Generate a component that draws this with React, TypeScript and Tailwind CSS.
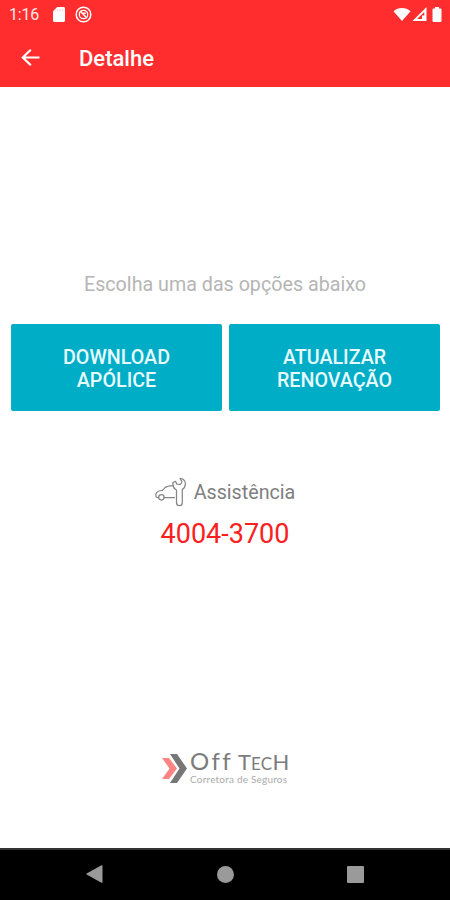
import type { ReactNode } from "react";

function StatusBar() {
  return (
    <div className="flex h-7 items-center justify-between pl-[9px] pr-2 text-white">
      <div className="flex items-center">
        <span className="w-11 pt-px text-[16px] leading-7 tracking-[-0.2px] text-white/90">1:16</span>
        <svg width="12" height="15" viewBox="0 0 12 15" fill="currentColor">
          <path d="M4.200 0H10.600Q12 0 12 1.400V13.600Q12 15 10.600 15H1.400Q0 15 0 13.600V4.200Z" />
          <path d="M4.600 2v2.400M6.900 2v2.400M9.200 2v2.400" stroke="#ffb5b5" strokeWidth="0.7" />
        </svg>
        <svg className="ml-2.5" width="17" height="17" viewBox="0 0 17 17" fill="none" stroke="currentColor">
          <circle cx="8.500" cy="8.500" r="7.300" strokeWidth="1.500" />
          <circle cx="8.500" cy="8.500" r="4.200" strokeWidth="1.300" />
          <path d="M5 5l7 7M8 7.200h2.800" strokeWidth="1.500" />
        </svg>
      </div>
      <div className="flex items-center">
        <svg width="18" height="13" viewBox="0 0 18 13" fill="currentColor">
          <path d="M9 13L.5 3.200Q4.200 0 9 0t8.500 3.200Z" />
        </svg>
        <svg className="ml-px" width="15" height="14" viewBox="0 0 15 14" fill="currentColor">
          <path fillRule="evenodd" d="M14.500 0V14H.5ZM12.300 5L5 12H10V8.500H12.300Z" />
        </svg>
        <svg className="ml-[5px]" width="10" height="15" viewBox="0 0 10 15" fill="currentColor">
          <path d="M3 0h4v1.500h1.500q1 0 1 1V14q0 1-1 1h-7q-1 0-1-1V2.500q0-1 1-1H3Z" />
        </svg>
      </div>
    </div>
  );
}

function ActionButton({ children }: { children: ReactNode }) {
  return (
    <button className="h-[87px] flex-1 rounded-[2px] bg-[#00adc6] pt-0.5 text-[19.7px] font-medium leading-[23px] text-[#e6faff]">
      {children}
    </button>
  );
}

function CarServiceIcon() {
  return (
    <svg
      width="32"
      height="30"
      viewBox="0 0 32 30"
      fill="none"
      stroke="#858585"
      strokeWidth="1.25"
      strokeLinecap="round"
      strokeLinejoin="round"
    >
      <path d="M18.500 8.600C14.500 8.800 12 9 10 10.600L7.500 13.300C4.500 13.500 1 15 .9 17.500V19.300Q1 20.500 3.500 20.500" />
      <circle cx="6.400" cy="20.300" r="2.700" />
      <path d="M9.300 20.500H19.500" />
      <path d="M21.500 13V25.800a2.900 2.900 0 0 0 5.800 0V12.500C31.300 10 31.300 4.500 27.800 2L25 1.400L27 4.800L25.500 7.500L22 7.200L20.500 4.300L17.800 5.800C17.700 9 19 11.800 21.500 13Z" />
    </svg>
  );
}

function Logo() {
  return (
    <div className="flex h-9 w-[128px]">
      <svg className="shrink-0" width="27" height="32" viewBox="0 0 27 32">
        <path d="M1 5H8L16 15.500L8 26H1L8.500 15.500Z" fill="#ff8585" />
        <path d="M9 1H16L26 15.500L16 30H9L18.500 15.500Z" fill="#777" />
      </svg>
      <div className="ml-0.5 whitespace-nowrap font-['Lato',sans-serif]">
        <div className="flex h-5 items-baseline text-[#7c7c7c]">
          <span className="w-[48px] text-[24px] leading-4 tracking-[2.400px]">Off</span>
          <span className="text-[22px] leading-4">T</span>
          <span className="text-[17px] leading-4 tracking-[0.3px]">EC</span>
          <span className="text-[22px] leading-4">H</span>
        </div>
        <p className="text-[10px] leading-[13px] tracking-[0.2px] text-[#aaa]">Corretora de Seguros</p>
      </div>
    </div>
  );
}

function NavigationBar() {
  return (
    <nav className="flex h-[52px] items-center justify-between border-t-2 border-[#333] bg-black px-[86px] pb-0.5 text-[#9a9a9a]">
      <svg width="17" height="18" viewBox="0 0 17 18" fill="currentColor">
        <path d="M15.500.3Q16.500 0 16.500 1V17Q16.500 18 15.500 17.700L.6 9.600Q0 9 .6 8.400Z" />
      </svg>
      <span className="size-[17px] rounded-full bg-[#9a9a9a]" />
      <span className="size-[17px] rounded-[1px] bg-[#9a9a9a]" />
    </nav>
  );
}

export default function App() {
  return (
    <div className="flex h-[900px] w-[450px] flex-col overflow-hidden bg-white font-['Roboto',sans-serif]">
      <header className="h-[87px] bg-[#ff2d2d]">
        <StatusBar />
        <div className="flex h-[59px] items-center pl-[21px] text-white">
          <svg
            width="19"
            height="18"
            viewBox="0 0 19 18"
            fill="none"
            stroke="currentColor"
            strokeWidth="2.200"
          >
            <path d="M18.500 8.500H2M9.800.8L1.800 8.500l8 7.700" />
          </svg>
          <h1 className="ml-[39px] pt-0.5 text-[22px] font-medium leading-none">Detalhe</h1>
        </div>
      </header>

      <main className="flex flex-1 flex-col items-center">
        <p className="mt-[185px] text-[19.7px] leading-[26px] text-[#b5b5b5]">
          Escolha uma das opções abaixo
        </p>
        <div className="mt-[26px] flex w-full gap-[7px] pl-[11px] pr-2.5">
          <ActionButton>
            DOWNLOAD
            <br />
            APÓLICE
          </ActionButton>
          <ActionButton>
            ATUALIZAR
            <br />
            RENOVAÇÃO
          </ActionButton>
        </div>
        <div className="mt-[66px] flex h-[30px] items-center gap-[7px]">
          <CarServiceIcon />
          <span className="pt-0.5 text-[19.7px] leading-[30px] text-[#808080]">Assistência</span>
        </div>
        <p className="mt-[11px] text-[27px] leading-8 text-[#fa2020]">4004-3700</p>
        <div className="mt-[203px]">
          <Logo />
        </div>
      </main>
      <NavigationBar />
    </div>
  );
}
